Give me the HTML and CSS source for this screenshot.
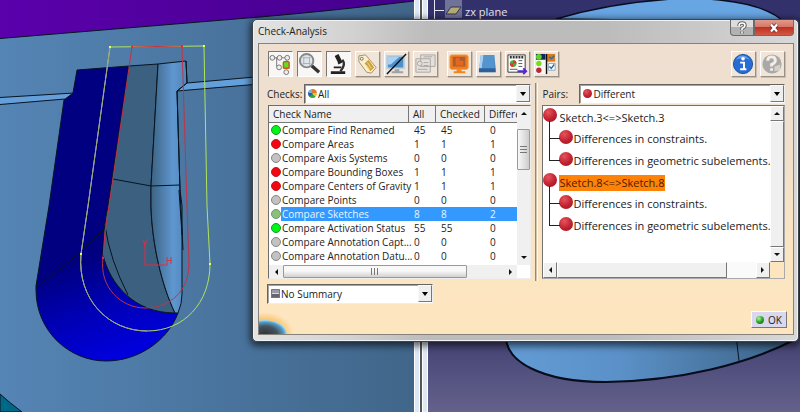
FILE: index.html
```html
<!DOCTYPE html>
<html lang="en">
<head>
<meta charset="utf-8">
<title>Check-Analysis</title>
<link rel="stylesheet" href="styles.css">
</head>
<body>
<main class="workspace">
  <section class="viewport" aria-label="Sketch view">
    <svg class="scene" viewBox="0 0 414 412" preserveAspectRatio="xMinYMin slice" aria-hidden="true">
      <defs>
        <linearGradient id="body" x1="0" x2="1"><stop offset="0" stop-color="#5585b5"/><stop offset=".5" stop-color="#4a759f"/><stop offset="1" stop-color="#41668a"/></linearGradient>
        <linearGradient id="sky" x1="0" x2="1"><stop offset="0" stop-color="#5b00ac"/><stop offset="1" stop-color="#44008c"/></linearGradient>
        <linearGradient id="wall" gradientUnits="userSpaceOnUse" x1="95" y1="255" x2="130" y2="350"><stop offset="0" stop-color="#000080"/><stop offset=".5" stop-color="#0000b4"/><stop offset="1" stop-color="#0000dc"/></linearGradient>
        <linearGradient id="fillet" gradientUnits="userSpaceOnUse" x1="153" y1="0" x2="184" y2="0"><stop offset="0" stop-color="#3f6788"/><stop offset=".65" stop-color="#5f97d0"/><stop offset="1" stop-color="#5488bd"/></linearGradient>
      </defs>
      <rect width="414" height="412" fill="url(#body)"/>
      <path d="M0 0H414V1Q330 11 260 17L0 38.500Z" fill="url(#sky)"/>
      <path d="M414 1Q330 11 260 17L0 38.500" class="edge"/>
      <path d="M0 394Q10 403 22 412H0Z" fill="#006887" class="outlined"/>
      <path d="M0 97.500L74 93L65 99L0 104.500Z" fill="#659fda"/>
      <path d="M0 97.500L74 93M0 104.500L65 99" class="edge"/>
      <path d="M187 83L414 63V71L177 91Z" fill="#659fda"/>
      <path d="M187 83L414 63M414 71L177 91" class="edge"/>
      <path d="M77 70L129 66L108 206Q103 228 103 255C110 285 138 314 178 313C168 340 139 361 106 361C69 361 36 331 36 290V286L49 206L64 100L73 93Z" fill="url(#wall)" class="outlined"/>
      <path d="M129 66L158 64L151 186V206C152 245 162 286 175 313C134 313 110 284 103 255Q103 228 108 206Z" fill="#3c6080" class="outlined"/>
      <path d="M158 64L186 61L187 83L177 91L180 190L182 206V294Q182 304 178 313H175C162 286 152 245 151 206V186Z" fill="url(#fillet)" class="outlined"/>
      <path d="M186 61L187 83L177 91L180 190L183 250M179 190L182 235M113 179L151 186L180 185M105 226Q110 260 128 295M36 287Q74 260 103 230" class="edge"/>
      <path d="M110 47L204 46L207 206L210 264C210 303 184 331 147 331C109 331 77 300 81 254L88 206Z" fill="none" stroke="#b2e35c"/>
      <path d="M110 47L88 206L81 254C77 300 109 331 147 331" fill="none" stroke="#9b9d8d"/>
      <path d="M132 47L182 46L187 206L189 264C189 290 171 308 145 308C121 308 99 287 103 258Q104 232 109 206Z" fill="none" stroke="#bd3547"/>
      <path d="M145 242V265H168M143 240l2 4l3-5M145 243v4M167 257v7M171 257v7M167 260.500h4" fill="none" stroke="#e12d3e"/>
      <path d="M109 46h2v2h-2zM203 45h2v2h-2zM80 253h2v2h-2zM209 263h2v2h-2z" fill="#eaff50"/>
      <path d="M131 46h2v2h-2zM181 45h2v2h-2zM102 257h2v2h-2zM188 263h2v2h-2z" fill="#ee2434"/>
    </svg>
  </section>
  <div class="splitter"></div>
  <section class="viewport" aria-label="Part view">
    <svg class="scene" viewBox="428 0 372 412" preserveAspectRatio="xMinYMin slice" aria-hidden="true">
      <defs>
        <linearGradient id="dusk" x1="0" y1="0" x2="0" y2="1"><stop offset="0" stop-color="#33316c"/><stop offset=".84" stop-color="#474575"/><stop offset="1" stop-color="#64628b"/></linearGradient>
        <linearGradient id="disc" gradientUnits="userSpaceOnUse" x1="506" y1="0" x2="790" y2="0"><stop offset="0" stop-color="#639bd4"/><stop offset=".4" stop-color="#5b91c8"/><stop offset="1" stop-color="#3d6387"/></linearGradient>
      </defs>
      <rect x="428" width="372" height="412" fill="url(#dusk)"/>
      <path d="M556 19Q610 3 672 -1H708Q765 3 784 22Z" fill="#68a5e3" stroke="#080e20" stroke-width="1.500"/>
      <path d="M506 335C505 361 540 382 606 382C680 381 748 364 796 339V330Z" fill="url(#disc)" stroke="#060c1c" stroke-width="2"/>
      <path d="M736 335L739 361" stroke="#0b1420"/>
      <path d="M434.500 0V20M434 10.500H444" stroke="#e8e8f5" fill="none"/>
      <path d="M445 0h17v18h-17z" fill="#717297"/>
      <path d="M446 14L451 7H461L456 14Z" fill="#b4ab73" stroke="#34344c"/>
    </svg>
    <span class="plane-label">zx plane</span>
  </section>

  <section class="dialog" role="dialog" aria-labelledby="dialog-title">
    <header class="titlebar">
      <h1 id="dialog-title">Check-Analysis</h1>
      <div class="window-buttons">
        <button class="win-help" aria-label="Help"><svg width="12" height="14" viewBox="0 0 12 14"><path d="M3 5Q3 2 6 2T9 4.500Q9 6 6 7.500V9M6 10.500V12.500" fill="none" stroke="#646464" stroke-width="3.500"/><path d="M3 5Q3 2 6 2T9 4.500Q9 6 6 7.500V9M6 10.500V12.500" fill="none" stroke="#fff" stroke-width="1.500"/></svg></button>
        <button class="win-close" aria-label="Close"><svg width="14" height="12" viewBox="0 0 14 12"><path d="M4 2.500L10 9.500M10 2.500L4 9.500" stroke="#6d3a39" stroke-width="4"/><path d="M4 2.500L10 9.500M10 2.500L4 9.500" stroke="#fff" stroke-width="2.200"/></svg></button>
      </div>
    </header>
    <div class="client">
      <div class="toolbar">
        <div class="tools">
          <button class="tool pressed" aria-label="Tree"><svg viewBox="0 0 24 24"><path d="M3 5H19M8 5V14H11M18 5V9" fill="none" stroke="#777"/><g fill="#eee" stroke="#777"><circle cx="3.500" cy="5" r="2.500"/><circle cx="11" cy="5" r="2.500"/><circle cx="19" cy="5" r="2.500"/><circle cx="10.500" cy="15" r="2.500"/><circle cx="18" cy="20" r="2.500"/></g><rect x="15" y="9" width="6" height="7" rx="1" fill="#5de01c" stroke="#d45320" stroke-width="1.500"/></svg></button>
          <button class="tool pressed" aria-label="Magnify"><svg viewBox="0 0 24 24"><path d="M14 13L22 20" stroke="#333" stroke-width="3.500"/><circle cx="9" cy="8" r="7" fill="#dfe6ea" stroke="#888" stroke-width="2"/><path d="M6 4V12M12 4V12M5 5H13M5 11H13" stroke="#a8b0b4"/></svg></button>
          <button class="tool pressed" aria-label="Microscope"><svg viewBox="0 0 24 24"><path d="M8 3l4-2 4 8-4 2zM11 10l4-2 1 2-4 2zM4 19H19V22H4zM7 14H15V16H7z" fill="#222"/><path d="M16 7Q20 12 14 19" fill="none" stroke="#303030" stroke-width="2.500"/></svg></button>
          <button class="tool" aria-label="Tag"><svg viewBox="0 0 24 24"><path d="M3 3L10 2L21 15L16 21L11 20L3 9Z" fill="#f7efd3" stroke="#a68f62"/><path d="M9 11l4-4 6 8-4 4z" fill="#d0a037"/><path d="M12 10l4 6M10 12l4 5" stroke="#f7df91"/><circle cx="6" cy="6" r="1.500" fill="#fff" stroke="#826c42"/></svg></button>
          <button class="tool" aria-label="Toggle display"><svg viewBox="0 0 24 24"><path d="M2 3H20V16H2z" fill="#4c90cd" stroke="#c2d0db" stroke-width="2"/><path d="M3 4H15L6 12H3z" fill="#a9d1f4"/><path d="M10 17h5v2h4v2H7v-2h3z" fill="#9da3a8"/><path d="M2 22L22 1" stroke="#111" stroke-width="1.500"/></svg></button>
          <button class="tool" aria-label="Reports"><svg viewBox="0 0 24 24" fill="#e3e0dc" stroke="#aaa6a2"><path d="M7 2H22V14H7zM2 6H17V20H2z"/><circle cx="6" cy="11" r="2.500"/><path d="M4 17H14M10 10H15M10 13H15M10 4H19"/></svg></button>
        </div>
        <div class="tools">
          <button class="tool" aria-label="Display settings"><svg viewBox="0 0 24 24"><rect x="2" y="2" width="19" height="15" rx="2" fill="#ee7c1e" stroke="#f59a3a"/><rect x="5" y="4" width="13" height="10" fill="#a75d38"/><path d="M8 5h4v3h4v5H8z" fill="#e7661e"/><path d="M9 17h5v2h4v2H6v-2h3z" fill="#ed861c"/></svg></button>
          <button class="tool" aria-label="Surface"><svg viewBox="0 0 24 24"><path d="M4 2H18L20 20H2z" fill="#4c8cc4"/><path d="M4 2h3L5 16H2z" fill="#a9cdec"/><path d="M7 2H18V16H5z" fill="#5595cf"/><path d="M2 16H19V20H2z" fill="#2f6097"/></svg></button>
          <button class="tool" aria-label="Report export"><svg viewBox="0 0 24 24"><path d="M2 2H20V20H2z" fill="#fff" stroke="#333"/><path d="M4 4.500H18" stroke="#333" stroke-width="2.500" stroke-dasharray="2 1"/><circle cx="7.500" cy="11" r="3.500" fill="#43b33e"/><path d="M7.500 11V7.500a3.500 3.500 0 0 1 3.500 3.500zM7.500 11V14.500a3.500 3.500 0 0 1-3.500-3.500z" fill="#de372b"/><path d="M13 8H17M13 11H17M13 14H17M4 17H12" stroke="#555"/><path d="M12 19H20M18 16L21 19L18 22" fill="none" stroke="#5521e2" stroke-width="2"/></svg></button>
          <button class="tool" aria-label="Check options"><svg viewBox="0 0 24 24"><path d="M1 1H12V22H1z" fill="#f8f8f4"/><path d="M1 1H11V7H1z" fill="#17265e"/><path d="M12 1H21V9H12z" fill="#d87a1d"/><path d="M12 1V22" stroke="#111" stroke-width="1.500"/><circle cx="4" cy="4" r="3" fill="#65d225"/><circle cx="4" cy="11" r="2.800" fill="#75dc20"/><circle cx="4" cy="18" r="2.800" fill="#bd2636"/><path d="M14 11H21V18H14z" fill="#fff" stroke="#91a5b5"/><path d="M15 14l2 2 3-4M15 4l2 2 3-3" fill="none" stroke="#2370b0" stroke-width="1.500"/></svg></button>
        </div>
        <div class="tools tools-end">
          <button class="tool" aria-label="Information"><svg viewBox="0 0 24 24"><circle cx="11.500" cy="11.500" r="10" fill="#276bd5" stroke="#184f9c"/><path d="M4 7Q10-2 19 7Q11 4 4 7" fill="#6ca3ee"/><circle cx="11.500" cy="6" r="1.900" fill="#fff"/><path d="M8.500 10H12.500V17M8.500 17H15" fill="none" stroke="#fff" stroke-width="2"/></svg></button>
          <button class="tool" aria-label="Help topics"><svg viewBox="0 0 24 24"><circle cx="11.500" cy="11.500" r="10" fill="#aaa9a7"/><path d="M7 8Q7 4 11 4T15 8Q15 10 11 12V14M11 16V18.500" fill="none" stroke="#f4eee8" stroke-width="3"/><path d="M14 14l6-2v6l-6 1z" fill="#d5d0ca"/></svg></button>
        </div>
      </div>

      <div class="panes">
        <section class="pane checks-pane">
          <div class="field">
            <label for="checks">Checks:</label>
            <div class="combo"><select id="checks"><option>All</option></select><span class="combo-icon pie"></span><span class="combo-arrow"></span></div>
          </div>
          <div class="listbox">
            <div class="table-clip">
            <table>
              <colgroup><col class="c-name"><col class="c-all"><col class="c-checked"><col class="c-diff"></colgroup>
              <thead><tr><th>Check Name</th><th>All</th><th>Checked</th><th>Differe</th></tr></thead>
              <tbody>
                <tr><td><i class="dot green"></i><span>Compare Find Renamed</span></td><td>45</td><td>45</td><td>0</td></tr>
                <tr><td><i class="dot red"></i><span>Compare Areas</span></td><td>1</td><td>1</td><td>1</td></tr>
                <tr><td><i class="dot"></i><span>Compare Axis Systems</span></td><td>0</td><td>0</td><td>0</td></tr>
                <tr><td><i class="dot red"></i><span>Compare Bounding Boxes</span></td><td>1</td><td>1</td><td>1</td></tr>
                <tr><td><i class="dot red"></i><span>Compare Centers of Gravity</span></td><td>1</td><td>1</td><td>1</td></tr>
                <tr><td><i class="dot"></i><span>Compare Points</span></td><td>0</td><td>0</td><td>0</td></tr>
                <tr class="selected"><td><i class="dot olive"></i><span>Compare Sketches</span></td><td>8</td><td>8</td><td>2</td></tr>
                <tr><td><i class="dot green"></i><span>Compare Activation Status</span></td><td>55</td><td>55</td><td>0</td></tr>
                <tr><td><i class="dot"></i><span>Compare Annotation Capt...</span></td><td>0</td><td>0</td><td>0</td></tr>
                <tr><td><i class="dot"></i><span>Compare Annotation Datu...</span></td><td>0</td><td>0</td><td>0</td></tr>
              </tbody>
            </table>
            </div>
            <div class="vbar soft"><i class="arrow up"></i><i class="thumb"></i><i class="arrow down"></i></div>
            <div class="hbar soft"><i class="arrow left"></i><i class="thumb"></i><i class="arrow right"></i></div>
          </div>
        </section>
        <div class="divider"></div>
        <section class="pane pairs-pane">
          <div class="field">
            <label for="pairs">Pairs:</label>
            <div class="combo"><select id="pairs"><option>Different</option></select><span class="combo-icon ball"></span><span class="combo-arrow"></span></div>
          </div>
          <div class="treebox">
            <ul class="tree">
              <li><div class="node"><i class="ball"></i><span>Sketch.3&lt;=&gt;Sketch.3</span></div>
                <ul><li><i class="ball"></i><span>Differences in constraints.</span></li><li><i class="ball"></i><span>Differences in geometric subelements.</span></li></ul></li>
              <li><div class="node"><i class="ball"></i><span class="marked">Sketch.8&lt;=&gt;Sketch.8</span></div>
                <ul><li><i class="ball"></i><span>Differences in constraints.</span></li><li><i class="ball"></i><span>Differences in geometric subelements.</span></li></ul></li>
            </ul>
            <div class="vbar classic"><i class="arrow up"></i><i class="thumb"></i><i class="arrow down"></i></div>
            <div class="hbar classic"><i class="arrow left"></i><i class="thumb"></i><i class="arrow right"></i></div>
          </div>
        </section>
      </div>

      <div class="combo summary"><select aria-label="Summary"><option>No Summary</option></select><span class="combo-icon sheet"></span><span class="combo-arrow"></span></div>
      <footer class="actions"><button class="ok"><i></i>OK</button></footer>
      <span class="orb"></span>
    </div>
  </section>
</main>
</body>
</html>
```
FILE: styles.css
```css
* { box-sizing: border-box; }
body { margin: 0; font: 10px/14px "Open Sans", "Noto Sans", sans-serif; color: #222; }
button, select { font: inherit; color: inherit; }
button { padding: 0; }
ul { list-style: none; margin: 0; padding: 0; }

.workspace { position: relative; display: grid; grid-template-columns: 414fr 14px 372fr; min-height: 100vh; overflow: hidden; }
.viewport { position: relative; overflow: hidden; }
.scene { display: block; width: 100%; height: 100%; }
.edge { fill: none; stroke: #071421; }
.outlined { stroke: #071421; }
.splitter { background: linear-gradient(90deg, #fff 0 1px, #dce9f5 1px 5px, #fff 5px 6px, #555 6px 8px, #fff 8px 9px, #dce9f5 9px 13px, #fff 13px); }
.plane-label { position: absolute; left: 37px; top: 5px; font-size: 11px; color: #e9e9f2; }

.dialog {
  position: absolute; top: 19px; left: 252px; right: 1px;
  padding: 0 4px 6px 5px; border: 1px solid #3c4248; border-radius: 5px;
  background: linear-gradient(90deg, #e3e3e3, #d2d2d2 18%, #bcbcbc 32% 65%, #cbcbcb 85%, #d8d8d8);
  box-shadow: inset 0 0 0 1px #f2f2f2, 0 2px 7px 2px rgba(0, 0, 0, .6);
}
.titlebar { display: flex; justify-content: space-between; align-items: flex-start; height: 23px; }
.titlebar h1 { margin: 3px 0 0; font-size: 10px; line-height: 16px; font-weight: 400; color: #222; }
.window-buttons { display: flex; }
.window-buttons button { display: grid; place-items: center; height: 16px; border: 1px solid #6b6b6b; border-top: 0; }
.win-help { width: 24px; border-radius: 0 0 0 4px; background: linear-gradient(#ddd 50%, #b2b2b2 50%); }
.win-close { width: 40px; border-radius: 0 0 4px 0; background: linear-gradient(#df9a8d 0, #d77564 48%, #bd3022 50%, #d45942); }

.client { position: relative; padding: 7px 8px 6px 8px; border: 1px solid #85827c; background: linear-gradient(#eedfd2, #f1dfcb 35%, #fbe5c1 75%, #fde6bf); }
.toolbar { display: flex; gap: 9px; padding-left: 1px; }
.tools { display: flex; gap: 4px; }
.tools-end { margin-left: auto; }
.tool { width: 25px; height: 26px; border: 1px solid; border-color: #fff #989087 #989087 #fff; background: #f1e5da; box-shadow: 1px 1px 0 #c9beb2; }
.tool svg { display: block; width: 23px; height: 23px; }
.tool.pressed { border-color: #7c7770 #fff #fff #7c7770; background: #f9f7f5; box-shadow: none; }

.panes { display: grid; grid-template-columns: 265fr 3px 243fr; gap: 4px; margin-top: 6px; }
.pane { min-width: 0; }
.field { display: flex; align-items: center; padding-top: 1px; }
.field label { flex: none; width: 37px; }
.combo { position: relative; flex: 1; height: 20px; border: 1px solid; border-color: #67645f #eee #eee #67645f; background: #fff; box-shadow: inset 1px 1px 0 #a6a29c; }
.combo select { display: block; width: 100%; height: 18px; padding: 0 16px 0 13px; border: 0; background: transparent; appearance: none; outline: 0; }
.combo-icon { position: absolute; left: 3px; top: 4px; width: 9px; height: 9px; pointer-events: none; }
.pie { border-radius: 50%; background: conic-gradient(#dd7a2e 0 25%, #e8c23b 25% 40%, #35a53a 40% 62%, #2c5db8 62% 80%, #80aedd 80%); }
.sheet { border-radius: 1px; background: linear-gradient(#9b9ba6 0 4px, #d8d8de 4px 5px, #65656f 5px); box-shadow: 0 0 0 1px #77777f inset; }
.combo-arrow { position: absolute; right: 0; top: 0; width: 14px; height: 17px; border: 1px solid; border-color: #f8f8f8 #777 #777 #f8f8f8; background: #efefef; pointer-events: none; }
.combo-arrow::after { content: ""; position: absolute; left: 3px; top: 6px; border: 3px solid transparent; border-top: 4px solid #000; border-bottom: 0; }
.ball { border-radius: 50%; background: radial-gradient(circle at 38% 30%, #e5555c, #c0202f 55%, #8c1827); }

.divider { margin-bottom: -2px; border-left: 1px solid #8b8982; border-right: 1px solid #fffaf0; background: #cfc4b2; }

.listbox, .treebox { display: grid; margin-top: 1px; height: 174px; border: 1px solid; background: #fff; }
.listbox { grid-template: minmax(0, 1fr) 13px / minmax(0, 1fr) 13px; margin-left: 1px; border-color: #6e6e6e #eee #eee #6e6e6e; }
.table-clip { overflow: hidden; }
table { width: 100%; table-layout: fixed; border-collapse: separate; border-spacing: 0; }
.c-name { width: 140px; } .c-all { width: 27px; } .c-checked { width: 49px; }
th { height: 17px; padding: 0 0 0 4px; border-right: 1px solid #777; border-bottom: 1px solid #777; background: #f0f0f0; font-weight: 400; text-align: left; white-space: nowrap; }
th:last-child { border-right: 0; }
td { height: 14px; padding: 0 0 0 5px; white-space: nowrap; }
td:first-child { display: flex; align-items: center; padding-left: 2px; }
td span { flex: 1; padding-left: 1px; }
.selected td { background: #3399ff; color: #e8f5ff; }
.selected td:first-child { background: linear-gradient(90deg, #fff 12px, #3399ff 12px); }
.dot { flex: none; width: 10px; height: 10px; border: 1px solid #858585; border-radius: 50%; background: #c2c2c2; }
.green { background: #00f618; border-color: #17942a; }
.red { background: #f40612; border-color: #b31e24; }
.olive { background: #8ac278; border-color: #78917c; }

.vbar, .hbar { display: flex; background: #f0f0f0; }
.vbar { flex-direction: column; }
.vbar .arrow { width: 100%; height: 15px; }
.hbar .arrow { width: 14px; height: 100%; }
.arrow { flex: none; display: grid; place-items: center; }
.arrow::after { content: ""; border: 3px solid transparent; }
.up::after { border-top: 0; border-bottom-color: #111; }
.down::after { border-bottom: 0; border-top-color: #111; }
.left::after { border-left: 0; border-right-color: #111; }
.right::after { border-right: 0; border-left-color: #111; }
.down, .right { margin-top: auto; }
.hbar .right { margin: 0 0 0 auto; }
.soft .thumb { display: grid; place-items: center; border: 1px solid #999; border-radius: 1px; }
.vbar.soft .thumb { height: 41px; margin-top: 8px; background: linear-gradient(90deg, #f8f8f8, #ccc); }
.hbar.soft .thumb { width: 74%; background: linear-gradient(#f8f8f8 45%, #d0d0d0); }
.soft .thumb::after { content: ""; width: 7px; height: 7px; background: repeating-linear-gradient(90deg, #777 0 1px, transparent 1px 3px); }
.vbar.soft .thumb::after { background: repeating-linear-gradient(#777 0 1px, transparent 1px 3px); }

.treebox { grid-template: minmax(0, 1fr) 16px / minmax(0, 1fr) 14px; border-color: #75726d #aaa #aaa #75726d; background: linear-gradient(#fde6bf, #fde6bf) right bottom / 14px 16px no-repeat #fff; }
.tree { overflow: hidden; font-size: 11px; white-space: nowrap; }
.node { display: flex; align-items: center; height: 21px; gap: 2px; padding-top: 2px; }
.tree i { flex: none; width: 14px; height: 14px; margin-top: -5px; }
.tree ul { margin-left: 6px; }
.tree ul li { position: relative; display: flex; align-items: center; height: 22px; padding: 2px 0 0 10px; }
.tree ul li::before { content: ""; position: absolute; left: 0; top: -6px; width: 10px; height: 17px; border: solid #222; border-width: 0 0 1px 1px; }
.tree ul li + li::before { top: -11px; height: 22px; }
.marked { background: #ff8208; color: #472000; line-height: 16px; }
.classic .arrow, .classic .thumb { border: 1px solid; border-color: #fff #777 #777 #fff; background: #f0f0f0; }
.vbar.classic .thumb { flex: 1; }
.hbar.classic { background: #fafafa; }
.hbar.classic .thumb { width: 75%; }

.summary { width: 166px; margin-top: 5px; }
.actions { display: flex; justify-content: flex-end; margin-top: 7px; margin-right: -2px; }
.ok { display: flex; align-items: center; justify-content: center; gap: 4px; width: 36px; height: 17px; border: 1px solid; border-color: #fff #777 #777 #fff; background: #d9d8ef; }
.ok i { width: 8px; height: 8px; border-radius: 50%; background: radial-gradient(circle at 35% 30%, #b6f3a4, #28a322 50%, #125e12); }
.orb { position: absolute; left: 0; bottom: 0; width: 36px; height: 24px; background: radial-gradient(ellipse 22px 14px at 6px 100%, #30343c 0, #46525e 55%, #519cc9 85%, #9bd3e9 97%, transparent 100%), radial-gradient(ellipse 30px 23px at 6px 100%, #f8b03e 40%, transparent 95%); }
```
